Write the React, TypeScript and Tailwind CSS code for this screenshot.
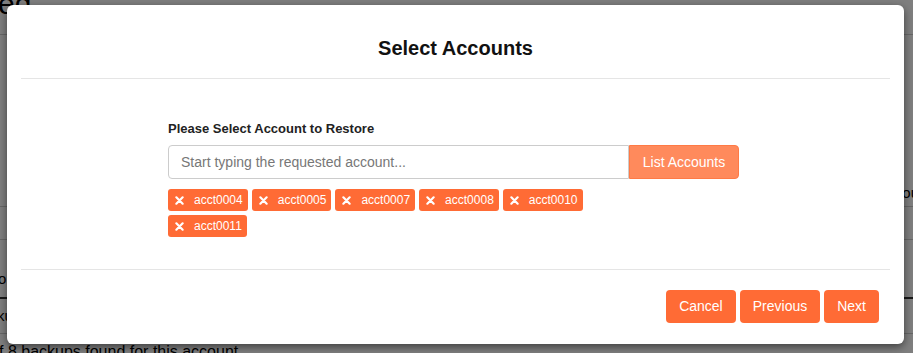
import React from "react";

const accounts = ["acct0004", "acct0005", "acct0007", "acct0008", "acct0010", "acct0011"];

function XIcon() {
  return (
    <svg width="9" height="9" viewBox="0 0 10 10" className="shrink-0">
      <path d="M1.5 1.5 L8.5 8.5 M8.5 1.5 L1.5 8.5" stroke="white" strokeWidth="2.4" strokeLinecap="round" />
    </svg>
  );
}

export default function App() {
  return (
    <div className="relative h-[353px] w-full overflow-hidden bg-white font-['Liberation_Sans',Arial,sans-serif] text-black">
      {/* background page */}
      <div className="flex flex-col">
        <div className="h-[35px] border-b border-[#cfcfcf] overflow-hidden">
          <div className="-mt-[14px] -ml-[2px] text-[30px] leading-[36px]">ed</div>
        </div>
        <div className="h-[171px] flex items-end justify-end pb-[4px]">
          <span className="text-[15px] leading-[18px] -mr-[6px]">ou</span>
        </div>
        <div className="h-[33px] border-t border-[#cfcfcf]" />
        <div className="h-[58px] border-t border-[#cfcfcf] flex items-center pt-[20px]">
          <span className="text-[15px] leading-[18px] -ml-[2px]">o</span>
        </div>
        <div className="h-[36px] border-t-2 border-[#333] flex items-center">
          <span className="text-[15px] leading-[18px] -ml-[3px]">ku</span>
        </div>
        <div className="border-t border-[#cfcfcf] pt-[9px]">
          <span className="text-[16px] leading-[18px] -ml-[1px] block">f 8 backups found for this account</span>
        </div>
      </div>

      {/* overlay */}
      <div className="absolute inset-0 bg-black/50" />

      {/* modal */}
      <div className="absolute left-[7px] top-[5px] w-[897px] h-[339px] rounded-[6px] bg-white shadow-[0_3px_9px_rgba(0,0,0,0.5)] flex flex-col">
        <div className="pt-[31px] pb-[18px] text-center">
          <h2 className="text-[20px] leading-[24px] font-bold text-[#111]">Select Accounts</h2>
        </div>
        <div className="mx-[14px] border-t border-[#e5e5e5]" />

        <div className="h-[190px] pt-[42px] pl-[161px]">
          <div className="w-[571px]">
            <label className="block text-[13px] leading-[16px] font-bold text-[#222]">
              Please Select Account to Restore
            </label>
            <div className="mt-[8px] flex h-[34px]">
              <input
                className="w-[461px] h-full rounded-l-[4px] border border-[#cccccc] px-[12px] text-[14px] text-[#555] placeholder:text-[#777] outline-none"
                placeholder="Start typing the requested account..."
              />
              <button className="w-[110px] h-full rounded-r-[4px] bg-[#ff8a5c] border border-[#ff7a45] text-white text-[14px]">
                List Accounts
              </button>
            </div>
            <div className="mt-[10px] flex flex-wrap gap-x-[4px] gap-y-[4px] w-[420px]">
              {accounts.map((a) => (
                <span
                  key={a}
                  className="h-[22px] flex items-center gap-[10px] pl-[7px] pr-[5px] rounded-[3px] bg-[#ff6b35] text-white text-[12px] leading-[14px]"
                >
                  <XIcon />
                  {a}
                </span>
              ))}
            </div>
          </div>
        </div>

        <div className="mx-[14px] border-t border-[#e5e5e5]" />
        <div className="flex justify-end gap-[4px] pt-[20px] pr-[25px]">
          <button className="h-[33px] px-[13px] rounded-[4px] bg-[#ff6b35] text-white text-[14px]">Cancel</button>
          <button className="h-[33px] px-[13px] rounded-[4px] bg-[#ff6b35] text-white text-[14px]">Previous</button>
          <button className="h-[33px] px-[13px] rounded-[4px] bg-[#ff6b35] text-white text-[14px]">Next</button>
        </div>
      </div>
    </div>
  );
}
